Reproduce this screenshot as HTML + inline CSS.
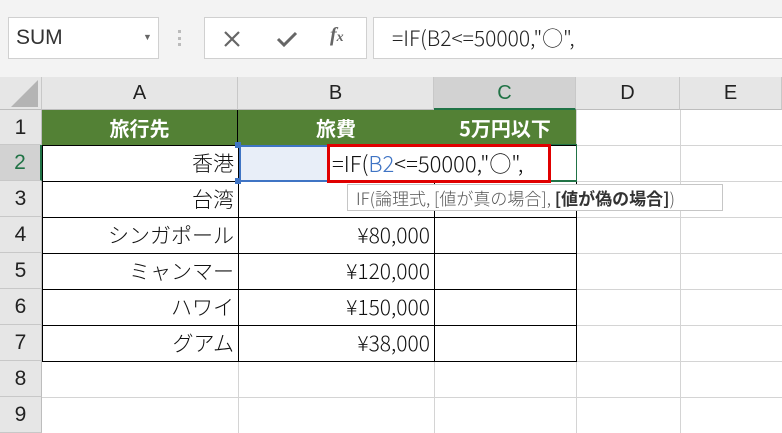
<!DOCTYPE html><html><head><meta charset="utf-8"><style>
body{margin:0;width:782px;height:433px;overflow:hidden;background:#fff;font-family:"Liberation Sans","Noto Sans CJK JP",sans-serif;position:relative}
div{position:absolute;box-sizing:border-box}
.t{font-family:"Noto Sans CJK JP","Liberation Sans",sans-serif}
.ch{top:77px;height:33px;background:#e6e6e6;border-right:1px solid #c8c8c8;border-bottom:1px solid #bdbdbd;text-align:center;line-height:32px;font-size:20px;color:#222}
.rh{left:0;width:42px;height:36px;background:#e6e6e6;border-bottom:1px solid #c8c8c8;border-right:1px solid #bdbdbd;text-align:center;line-height:36px;font-size:21px;color:#222}
.vl{top:110px;bottom:0;width:1px;background:#d4d4d4}
.hl{left:42px;right:0;height:1px;background:#d4d4d4}
.c{height:36px;line-height:36px;font-size:21px;color:#111;padding:0 4px;font-weight:300}
</style></head><body>
<div style="left:0;top:0;width:782px;height:77px;background:#f3f3f3"></div>
<div style="left:8px;top:17px;width:151px;height:42px;background:#fff;border:1px solid #d0d0d0;font-size:21px;line-height:40px;padding-left:7px;color:#333">SUM<span style="position:absolute;left:134px;top:-1px;font-size:9px;color:#666">▼</span></div>
<div style="left:178px;top:30px;width:4px;height:16px;border-left:3px dotted #bbb"></div>
<div style="left:204px;top:17px;width:163px;height:42px;background:#fff;border:1px solid #d0d0d0"></div>
<svg style="position:absolute;left:222px;top:29px" width="20" height="20"><path d="M3 3L17 17M17 3L3 17" stroke="#666" stroke-width="2.2"/></svg>
<svg style="position:absolute;left:275px;top:29px" width="24" height="20"><path d="M3 10L9 16L21 4" stroke="#666" stroke-width="3" fill="none"/></svg>
<div style="left:330px;top:24px;font-family:'Liberation Serif',serif;font-style:italic;font-size:20px;color:#666;font-weight:bold">f<span style="font-size:14px">x</span></div>
<div style="left:373px;top:17px;width:420px;height:42px;background:#fff;border:1px solid #d0d0d0;font-size:21px;line-height:40px;padding-left:18px;color:#222;font-weight:300" class="t">=IF(B2&lt;=50000,"○",</div>
<div class="ch" style="left:0;width:42px;background:#e6e6e6"><svg style="position:absolute;left:10px;top:3px" width="30" height="28"><path d="M28 0V27H1Z" fill="#b4b4b4"/></svg></div>
<div class="ch" style="left:42px;width:196px">A</div>
<div class="ch" style="left:238px;width:196px">B</div>
<div class="ch" style="left:434px;width:142px;background:#d2d2d2;color:#217346;border-bottom:2px solid #217346">C</div>
<div class="ch" style="left:576px;width:104px">D</div>
<div class="ch" style="left:680px;width:102px">E</div>
<div class="rh" style="top:110px;height:35px">1</div>
<div class="rh" style="top:145px;background:#d2d2d2;color:#217346;border-right:2px solid #217346">2</div>
<div class="rh" style="top:181px">3</div><div class="rh" style="top:217px">4</div><div class="rh" style="top:253px">5</div><div class="rh" style="top:289px">6</div><div class="rh" style="top:325px">7</div><div class="rh" style="top:361px">8</div><div class="rh" style="top:397px">9</div>
<div class="vl" style="left:238px"></div><div class="vl" style="left:434px"></div><div class="vl" style="left:576px"></div><div class="vl" style="left:680px"></div>
<div class="hl" style="top:145px"></div><div class="hl" style="top:181px"></div><div class="hl" style="top:217px"></div><div class="hl" style="top:253px"></div><div class="hl" style="top:289px"></div><div class="hl" style="top:325px"></div><div class="hl" style="top:361px"></div><div class="hl" style="top:397px"></div>
<div style="left:42px;top:110px;width:534px;height:35px;background:#538135"></div>
<div class="t" style="left:42px;top:110px;width:196px;height:35px;border-right:1px solid #000;color:#fff;font-weight:bold;text-align:center;line-height:35px;font-size:20px">旅行先</div>
<div class="t" style="left:238px;top:110px;width:196px;height:35px;color:#fff;font-weight:bold;text-align:center;line-height:35px;font-size:20px">旅費</div>
<div class="t" style="left:434px;top:110px;width:142px;height:35px;color:#fff;font-weight:bold;text-align:center;line-height:35px;font-size:20px">5万円以下</div>
<div style="left:42px;top:145px;width:535px;height:217px;border:1px solid #000"></div>
<div style="left:238px;top:145px;width:1px;height:216px;background:#000"></div>
<div style="left:434px;top:181px;width:1px;height:180px;background:#000"></div>
<div style="left:42px;top:181px;width:534px;height:1px;background:#000"></div>
<div style="left:42px;top:217px;width:534px;height:1px;background:#000"></div>
<div style="left:42px;top:253px;width:534px;height:1px;background:#000"></div>
<div style="left:42px;top:289px;width:534px;height:1px;background:#000"></div>
<div style="left:42px;top:325px;width:534px;height:1px;background:#000"></div>
<div style="left:239px;top:145px;width:195px;height:37px;background:#e8eef8;border:2px solid #3f74c4"></div>
<div style="left:235px;top:142px;width:6px;height:6px;background:#3f74c4"></div>
<div style="left:235px;top:178px;width:6px;height:6px;background:#3f74c4"></div>
<div style="left:434px;top:144px;width:143px;height:38px;border:1px solid #217346;border-bottom:2px solid #217346"></div>
<div class="c t" style="left:42px;top:145px;width:196px;text-align:right">香港</div>
<div class="c t" style="left:42px;top:181px;width:196px;text-align:right">台湾</div>
<div class="c t" style="left:42px;top:217px;width:196px;text-align:right">シンガポール</div>
<div class="c t" style="left:42px;top:253px;width:196px;text-align:right">ミャンマー</div>
<div class="c t" style="left:42px;top:289px;width:196px;text-align:right">ハワイ</div>
<div class="c t" style="left:42px;top:325px;width:196px;text-align:right">グアム</div>
<div class="c t" style="left:238px;top:217px;width:196px;text-align:right">¥80,000</div>
<div class="c t" style="left:238px;top:253px;width:196px;text-align:right">¥120,000</div>
<div class="c t" style="left:238px;top:289px;width:196px;text-align:right">¥150,000</div>
<div class="c t" style="left:238px;top:325px;width:196px;text-align:right">¥38,000</div>
<div class="t" style="left:327px;top:144px;width:224px;height:39px;background:#fff;border:3px solid #e00000;font-size:22px;line-height:33px;padding-left:2px;color:#111;white-space:nowrap;font-weight:300">=IF(<span style="color:#3f74c4">B2</span>&lt;=50000,"○",</div>
<div class="t" style="left:347px;top:184px;width:376px;height:27px;background:#fff;border:1px solid #c6c6c6;font-size:17px;line-height:25px;padding-left:8px;color:#555;white-space:nowrap;font-weight:300">IF(論理式, [値が真の場合], <span style="color:#333;font-weight:700">[値が偽の場合]</span>)</div>
</body></html>
